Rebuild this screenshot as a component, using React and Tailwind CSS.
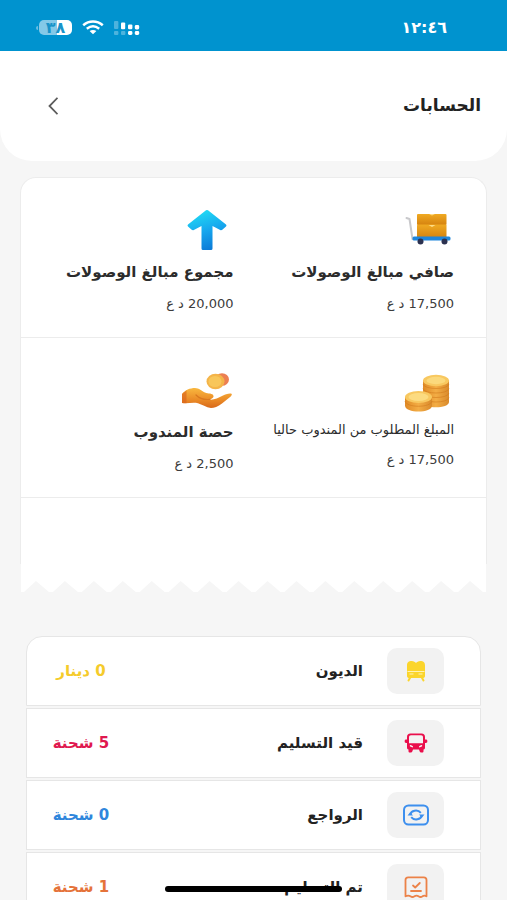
import { useId } from 'react';

function SignalIcon() {
  return (
    <svg viewBox="0 0 26 16" className="h-4 w-[26px]" fill="#ffffff">
      <rect x="0" y="1" width="4.4" height="8" rx="1" opacity="0.3" />
      <rect x="7" y="2.5" width="4.2" height="6.8" rx="1" />
      <rect x="14" y="4.4" width="4.4" height="4.8" rx="1.2" />
      <rect x="20.8" y="5" width="4.4" height="4.4" rx="1.4" />
      <rect x="0" y="11" width="4.4" height="4" rx="1" opacity="0.3" />
      <rect x="7" y="11" width="4.4" height="4" rx="1" opacity="0.3" />
      <rect x="14" y="11" width="4.4" height="4" rx="1.4" />
      <rect x="20.8" y="11" width="4.4" height="4" rx="1.4" />
    </svg>
  );
}

function WifiIcon() {
  return (
    <svg viewBox="0 0 22 15" className="h-[15px] w-[22px]" fill="none" stroke="#ffffff" strokeWidth="2.5">
      <path d="M1.2 5.2C7 .2 15 .2 20.8 5.2" />
      <path d="M4.8 8.7c3.8-3 8.6-3 12.4 0" />
      <path d="M7.6 11.1c2-1.5 4.8-1.5 6.8 0L11 14.2z" fill="#ffffff" stroke="none" />
    </svg>
  );
}

function Battery({ level }) {
  return (
    <div className="flex items-center gap-px">
      <div className="flex h-[15px] w-[33px] items-center justify-center rounded-[5px] bg-linear-to-l from-white from-45% to-[#84c9e8] to-45%">
        <span className="text-base leading-none font-bold text-[#1a93c9]">{level}</span>
      </div>
      <div className="h-1 w-0.5 rounded-s-none rounded-e-full bg-[#6bbde2]" />
    </div>
  );
}

function TrolleyIcon() {
  const id = useId();
  return (
    <svg viewBox="0 0 54 56" className="h-14 w-[54px]">
      <defs>
        <linearGradient id={id} x1="0" y1="0" x2="0" y2="1">
          <stop offset="0" stopColor="#f0aa22" />
          <stop offset="1" stopColor="#d5820f" />
        </linearGradient>
      </defs>
      <path d="M6.500 16 9.500 17 12.500 37H17" fill="none" stroke="#c9c9cc" strokeWidth="2" strokeLinecap="round" strokeLinejoin="round" />
      <rect x="17" y="12" width="29.5" height="11" rx="1" fill={`url(#${id})`} />
      <rect x="17" y="22.5" width="29.5" height="13.5" rx="1" fill={`url(#${id})`} />
      <path d="M29 12h6l-3 1.5zM28.5 23h7l-3.5 2z" fill="#ffdc84" />
      <rect x="12.5" y="34.5" width="38" height="4" rx="1.5" fill="#1f86dc" />
      <circle cx="20.5" cy="39.5" r="3" fill="#2b3150" />
      <circle cx="44.5" cy="39.5" r="3" fill="#2b3150" />
    </svg>
  );
}

function ArrowUpIcon() {
  const id = useId();
  return (
    <svg viewBox="0 0 54 56" className="h-14 w-[54px]">
      <defs>
        <linearGradient id={id} x1="0.35" y1="0" x2="0.65" y2="1">
          <stop offset="0" stopColor="#20dcf4" />
          <stop offset="0.5" stopColor="#17a7ee" />
          <stop offset="1" stopColor="#0b78d6" />
        </linearGradient>
      </defs>
      <path
        d="M26 8.3Q27 7.6 28 8.3L46 22.6Q47 23.5 46 24.4L42.3 27.7Q41.3 28.5 40.2 27.9L32.5 24V46.5Q32.5 48 31 48H23Q21.5 48 21.5 46.5V24L13.8 27.9Q12.7 28.5 11.7 27.7L8 24.4Q7 23.5 8 22.6Z"
        fill={`url(#${id})`}
      />
    </svg>
  );
}

function CoinsIcon() {
  const id = useId();
  return (
    <svg viewBox="0 0 54 56" className="h-14 w-[54px]">
      <defs>
        <linearGradient id={id} x1="0" y1="0" x2="1" y2="0">
          <stop offset="0" stopColor="#e08a26" />
          <stop offset="0.5" stopColor="#f3ad45" />
          <stop offset="1" stopColor="#d98a2c" />
        </linearGradient>
      </defs>
      <path d="M23 18v22c0 7 26 7 26 0V18z" fill={`url(#${id})`} />
      <path d="M23 22c1 6 25 6 26 0M23 26.5c1 6 25 6 26 0M23 31c1 6 25 6 26 0M23 35.5c1 6 25 6 26 0" fill="none" stroke="#d27a1c" strokeWidth="0.6" />
      <ellipse cx="36" cy="18.5" rx="13" ry="5.7" fill="#f8c860" />
      <ellipse cx="36" cy="18.5" rx="9.5" ry="3.7" fill="#fbd97c" />
      <path d="M5 35v8.5c0 8 27 8 27 0V35z" fill={`url(#${id})`} />
      <path d="M5 39c1 7 26 7 27 0" fill="none" stroke="#d27a1c" strokeWidth="0.6" />
      <ellipse cx="18.5" cy="35" rx="13.5" ry="6" fill="#f8c860" />
      <ellipse cx="18.5" cy="35" rx="10" ry="4" fill="#fcdb80" />
    </svg>
  );
}

function HandCoinsIcon() {
  const id = useId();
  return (
    <svg viewBox="0 0 54 56" className="h-14 w-[54px]">
      <defs>
        <linearGradient id={id} x1="0" y1="0" x2="0" y2="1">
          <stop offset="0" stopColor="#f9b83f" />
          <stop offset="0.6" stopColor="#ea8a26" />
          <stop offset="1" stopColor="#d8691a" />
        </linearGradient>
      </defs>
      <ellipse cx="42" cy="17.5" rx="7" ry="6.3" fill="#ec7f52" />
      <ellipse cx="35.5" cy="19.5" rx="9" ry="7.8" fill="#f4b449" />
      <ellipse cx="35" cy="19.5" rx="6.5" ry="5.5" fill="#f8c65a" />
      <path
        d="M2 32C5 28 10 26 15 26c4 0 7 3 10 4.5 3 1.3 8 .5 8.500 3.500.3 2-2 3-4.500 3.500 5 .7 9-1.500 13-3.500 3-1.500 6-2.800 9-2.500 1.500.3.8 1.800-.3 3L42 41.500c-4 3-8 4.500-11 4.500-5-.5-9-3.500-13-4.700C13 40 7 42 2 41z"
        fill={`url(#${id})`}
      />
      <path d="M2 32v9l4.500.2V28.500z" fill="#d9601b" opacity="0.6" />
      <path d="M16 33c4 4 9 5 14 4.300" fill="none" stroke="#d9781f" strokeWidth="1.2" strokeLinecap="round" />
    </svg>
  );
}

function SeatIcon() {
  return (
    <svg viewBox="0 0 24 24" className="h-6 w-6">
      <path d="M3 6.500C3 3 5 2 7.500 2S11 3 12 4c1-1 2-2 4.500-2S21 3 21 6.500V12H3z" fill="#fbd52c" />
      <path d="M3 12h18v5c0 1.500-1 2-2.500 2h-13C4 19 3 18.500 3 17z" fill="#fbd52c" />
      <path d="M3.500 12.500h17M5.500 15h4M14.500 15h4" stroke="#fff3b5" strokeWidth="1" />
      <path d="M6.500 18 4.500 21.500M17.500 18l2 3.500" stroke="#fbd52c" strokeWidth="2" strokeLinecap="round" />
    </svg>
  );
}

function BusIcon() {
  return (
    <svg viewBox="0 0 24 24" className="h-6 w-6" fill="#ea0f4c">
      <path d="M6.500 2.500h11c2.300 0 3.500 1.300 3.500 3.500v2.500h1c.8 0 1.300.6 1.300 1.300v1c0 .7-.5 1.200-1.300 1.200h-1v4.500c0 1.300-.5 2-1.500 2v1.700c0 .8-.5 1.300-1.300 1.300H17c-.6 0-1-.3-1.300-.9L15 18.500H9l-.7 2.100c-.3.6-.7.9-1.300.9H5.800c-.8 0-1.300-.5-1.300-1.300v-1.700c-1 0-1.500-.7-1.500-2V12H2c-.8 0-1.300-.5-1.300-1.200v-1C.7 9.100 1.200 8.500 2 8.500h1V6c0-2.200 1.200-3.500 3.500-3.500z" />
      <path d="M7 4.300h10c1.300 0 2 .7 2 2v6H5v-6c0-1.300.7-2 2-2z" fill="#f4f4f4" />
      <path d="M6.500 14.800l1.800.8M17.500 14.800l-1.800.8" stroke="#f4f4f4" strokeWidth="1.5" strokeLinecap="round" />
    </svg>
  );
}

function ReturnIcon() {
  return (
    <svg viewBox="0 0 28 24" className="h-6 w-7" fill="none" stroke="#3d8fee" strokeWidth="2">
      <rect x="2" y="2.5" width="24" height="19" rx="4.5" />
      <path d="M8.300 11.500C9 7.500 15.500 5.800 18.800 9.800M19.700 12.500c-.7 4-7.200 5.700-10.500 1.700" />
      <path d="M17 11.500h5.500l-2.700 3.300zM11 12.500H5.500l2.700-3.300z" fill="#3d8fee" stroke="none" />
    </svg>
  );
}

function DeliveredIcon() {
  return (
    <svg viewBox="0 0 24 24" className="h-6 w-6" fill="none" stroke="#ec8248" strokeWidth="1.8" strokeLinecap="round" strokeLinejoin="round">
      <path d="M1.500 21.300V5c0-1.700 1-2.700 2.700-2.700h15.600c1.700 0 2.700 1 2.700 2.700v16.300c-1.500-1-2.800-1-4 0-1.300 1-2.600 1-4 0-1.400-1-2.600-1-4 0-1.400 1-2.700 1-4 0-1.500-1-3-1-5 0z" />
      <path d="M9 10.500l2.200 2 4.600-4.500M7 16h10" />
    </svg>
  );
}

const summary = [
  [
    { title: 'صافي مبالغ الوصولات', amount: '17,500 د ع', Icon: TrolleyIcon },
    { title: 'مجموع مبالغ الوصولات', amount: '20,000 د ع', Icon: ArrowUpIcon },
  ],
  [
    { title: 'المبلغ المطلوب من المندوب حاليا', amount: '17,500 د ع', Icon: CoinsIcon, small: true },
    { title: 'حصة المندوب', amount: '2,500 د ع', Icon: HandCoinsIcon },
  ],
];

const shipments = [
  { label: 'الديون', value: '0 دينار', color: 'text-[#f5cb2b]', Icon: SeatIcon },
  { label: 'قيد التسليم', value: '5 شحنة', color: 'text-[#e0194f]', Icon: BusIcon },
  { label: 'الرواجع', value: '0 شحنة', color: 'text-[#2f86dc]', Icon: ReturnIcon },
  { label: 'تم التسليم', value: '1 شحنة', color: 'text-[#e5733a]', Icon: DeliveredIcon },
];

function SummaryCell({ title, amount, Icon, small }) {
  return (
    <div>
      <Icon />
      <h2
        className={`whitespace-nowrap text-[#2c2c2c] ${
          small ? 'text-[13px] leading-6' : 'text-[15px] leading-7 font-bold'
        }`}
      >
        {title}
      </h2>
      <p className="mt-1.5 text-[13px] leading-6 text-[#3c3c3c]">{amount}</p>
    </div>
  );
}

// Torn receipt edge under the summary card
function ReceiptEdge() {
  const notches = Array.from({ length: 16 }, (_, i) => {
    const x = 3 + i * 29;
    return `L${x} 12L${x + 12} 1L${x + 25} 12`;
  }).join('');
  return (
    <svg viewBox="0 0 466 12" preserveAspectRatio="none" className="block h-3 w-full">
      <path d={`M0 0V12${notches}H466V0Z`} fill="#ffffff" />
    </svg>
  );
}

function ShipmentRow({ label, value, color, Icon }) {
  return (
    <li className="border border-[#e6e6e6] bg-white first:rounded-t-2xl">
      <button type="button" className="flex h-[68px] w-full items-center ps-9 pe-3.5">
        <span className="flex h-[46px] w-[57px] items-center justify-center rounded-[10px] bg-[#f2f2f2]">
          <Icon />
        </span>
        <span className="ms-6 flex-1 text-start text-[15px] font-bold text-[#222222]">{label}</span>
        <span className={`w-20 text-center text-[15px] font-bold whitespace-nowrap ${color}`}>{value}</span>
      </button>
    </li>
  );
}

export default function App() {
  return (
    <div
      dir="rtl"
      className="relative flex h-screen flex-col overflow-hidden bg-[#f6f6f6] font-['DejaVu_Sans',sans-serif]"
    >
      <div className="flex h-[51px] shrink-0 items-center justify-between bg-[#0093cf] ps-[60px] pe-9 pt-1">
        <span className="text-base leading-none font-bold text-white">١٢:٤٦</span>
        <div className="flex items-center gap-2.5">
          <SignalIcon />
          <WifiIcon />
          <Battery level="٣٨" />
        </div>
      </div>

      <header className="flex h-[110px] shrink-0 items-center justify-between rounded-b-[32px] bg-white ps-[26px] pe-11">
        <h1 className="text-[17px] font-bold text-[#222222]">الحسابات</h1>
        <button type="button" aria-label="رجوع" className="p-1">
          <svg viewBox="0 0 10 18" className="h-[18px] w-2.5" fill="none" stroke="#5c5c5c" strokeWidth="1.8">
            <path d="M9.500.8 1.500 9l8 8.200" />
          </svg>
        </button>
      </header>

      <main className="flex-1 overflow-y-auto [scrollbar-width:none]">
        <section className="mx-5 mt-4">
          <div className="rounded-t-2xl border border-b-0 border-[#ececec] bg-white">
            {summary.map((row) => (
              <div key={row[0].title} className="grid h-40 grid-cols-2 gap-2 border-b border-[#ececec] ps-8 pt-6">
                {row.map((cell) => (
                  <SummaryCell key={cell.title} {...cell} />
                ))}
              </div>
            ))}
            <div className="h-[66px]" />
          </div>
          <div className="px-px">
            <div className="h-4 bg-white" />
            <ReceiptEdge />
          </div>
        </section>

        <ul className="mx-[26px] mt-11 flex flex-col gap-0.5">
          {shipments.map((item) => (
            <ShipmentRow key={item.label} {...item} />
          ))}
        </ul>
      </main>

      <div className="absolute inset-x-0 bottom-2 flex justify-center">
        <div className="h-1.5 w-[35%] rounded-full bg-black" />
      </div>
    </div>
  );
}
